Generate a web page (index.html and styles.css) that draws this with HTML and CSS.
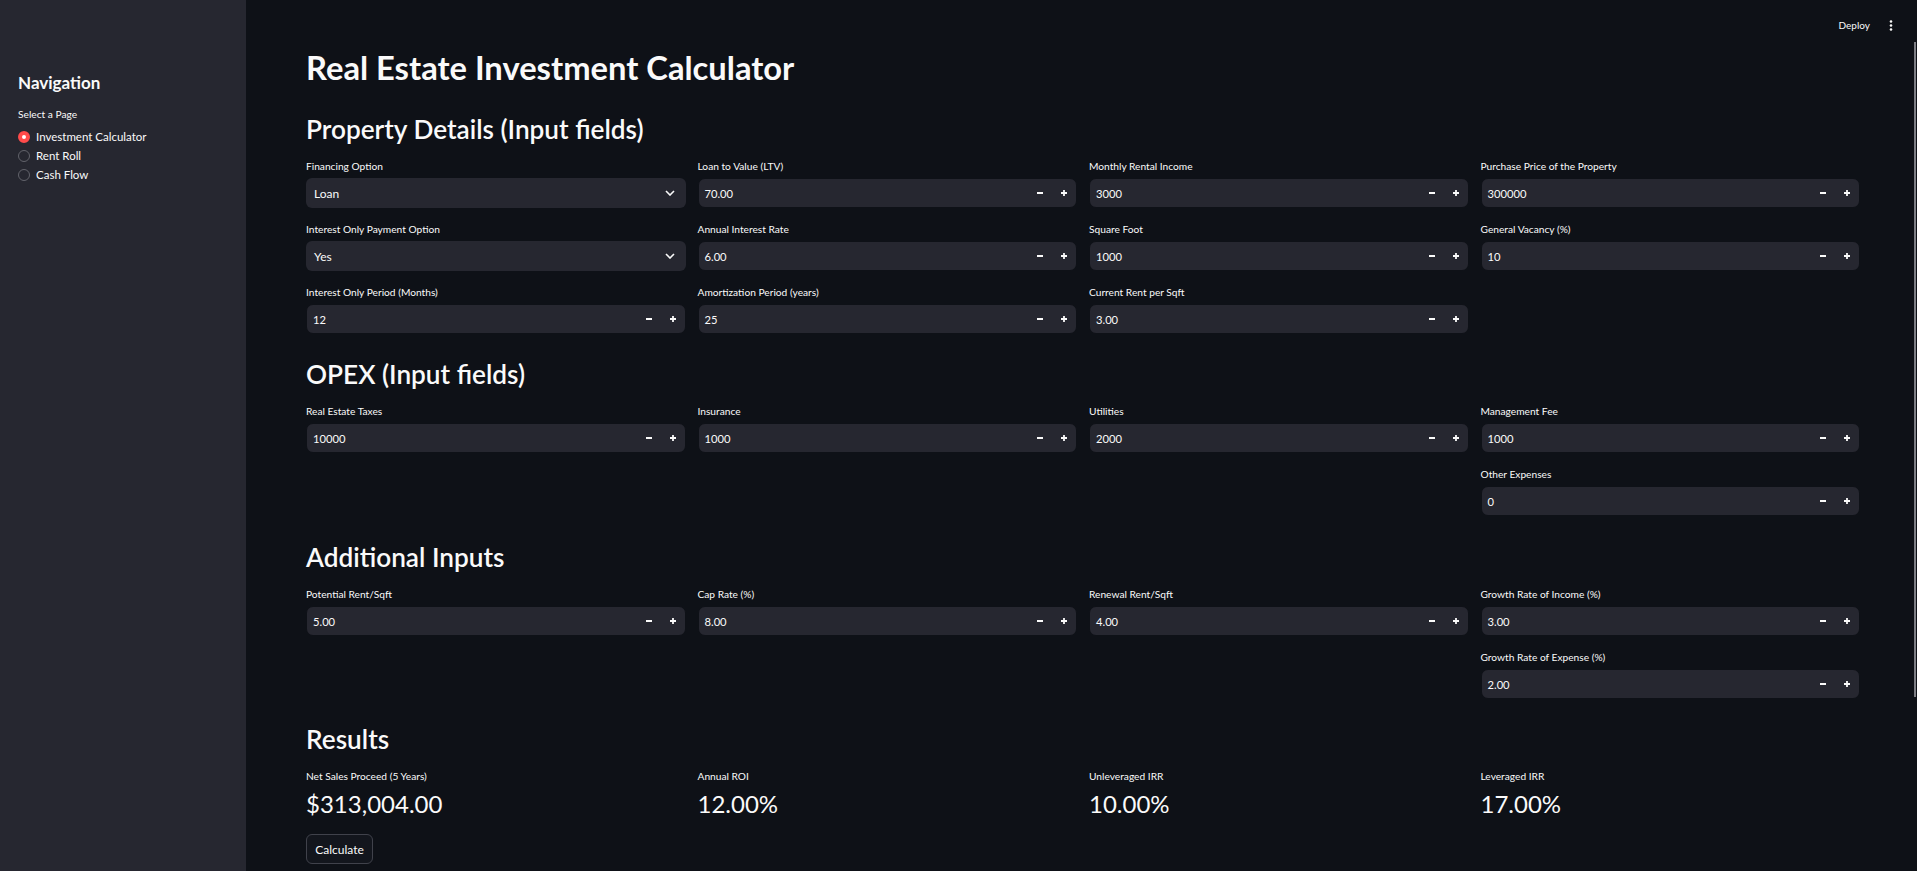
FILE: index.html
```html
<!DOCTYPE html>
<html lang="en">

<head>
    <meta charset="UTF-8">
    <title>Real Estate Investment Calculator</title>
    <link rel="stylesheet" href="styles.css">
</head>

<body>
    <svg class="defs" width="0" height="0">
        <symbol id="minus" viewBox="0 0 8 8"><path d="M1 3h6v2H1z" fill="currentColor" /></symbol>
        <symbol id="plus" viewBox="0 0 8 8"><path d="M3.1 1h1.8v2.1H7v1.8H4.9V7H3.1V4.9H1V3.1h2.1z" fill="currentColor" /></symbol>
        <symbol id="chevron" viewBox="0 0 10 6"><path d="M1 1l4 4 4-4" fill="none" stroke="currentColor" stroke-width="1.6" /></symbol>
    </svg>

    <aside class="sidebar">
        <h3 class="nav-title">Navigation</h3>
        <p class="label">Select a Page</p>
        <div class="radio-item"><span class="radio selected"></span>Investment Calculator</div>
        <div class="radio-item"><span class="radio"></span>Rent Roll</div>
        <div class="radio-item"><span class="radio"></span>Cash Flow</div>
    </aside>

    <main class="main">
        <header class="topbar">
            <span class="deploy">Deploy</span>
            <svg class="kebab" width="4" height="11" viewBox="0 0 4 11"><circle cx="2" cy="1.5" r="1.3" fill="#fafafa" /><circle cx="2" cy="5.5" r="1.3" fill="#fafafa" /><circle cx="2" cy="9.5" r="1.3" fill="#fafafa" /></svg>
        </header>
        <div class="scroll-thumb"></div>

        <h1 class="title">Real Estate Investment Calculator</h1>

        <h2 class="heading first">Property Details (Input fields)</h2>
        <section class="columns">
            <div class="column">
                <div class="field"><p class="label">Financing Option</p>
                    <div class="select"><span>Loan</span><svg class="chev"><use href="#chevron" /></svg></div></div>
                <div class="field"><p class="label">Interest Only Payment Option</p>
                    <div class="select"><span>Yes</span><svg class="chev"><use href="#chevron" /></svg></div></div>
                <div class="field"><p class="label">Interest Only Period (Months)</p>
                    <div class="number"><span class="value">12</span><svg class="step"><use href="#minus" /></svg><svg class="step"><use href="#plus" /></svg></div></div>
            </div>
            <div class="column">
                <div class="field"><p class="label">Loan to Value (LTV)</p>
                    <div class="number"><span class="value">70.00</span><svg class="step"><use href="#minus" /></svg><svg class="step"><use href="#plus" /></svg></div></div>
                <div class="field"><p class="label">Annual Interest Rate</p>
                    <div class="number"><span class="value">6.00</span><svg class="step"><use href="#minus" /></svg><svg class="step"><use href="#plus" /></svg></div></div>
                <div class="field"><p class="label">Amortization Period (years)</p>
                    <div class="number"><span class="value">25</span><svg class="step"><use href="#minus" /></svg><svg class="step"><use href="#plus" /></svg></div></div>
            </div>
            <div class="column">
                <div class="field"><p class="label">Monthly Rental Income</p>
                    <div class="number"><span class="value">3000</span><svg class="step"><use href="#minus" /></svg><svg class="step"><use href="#plus" /></svg></div></div>
                <div class="field"><p class="label">Square Foot</p>
                    <div class="number"><span class="value">1000</span><svg class="step"><use href="#minus" /></svg><svg class="step"><use href="#plus" /></svg></div></div>
                <div class="field"><p class="label">Current Rent per Sqft</p>
                    <div class="number"><span class="value">3.00</span><svg class="step"><use href="#minus" /></svg><svg class="step"><use href="#plus" /></svg></div></div>
            </div>
            <div class="column">
                <div class="field"><p class="label">Purchase Price of the Property</p>
                    <div class="number"><span class="value">300000</span><svg class="step"><use href="#minus" /></svg><svg class="step"><use href="#plus" /></svg></div></div>
                <div class="field"><p class="label">General Vacancy (%)</p>
                    <div class="number"><span class="value">10</span><svg class="step"><use href="#minus" /></svg><svg class="step"><use href="#plus" /></svg></div></div>
            </div>
        </section>

        <h2 class="heading opex">OPEX (Input fields)</h2>
        <section class="columns">
            <div class="column">
                <div class="field"><p class="label">Real Estate Taxes</p>
                    <div class="number"><span class="value">10000</span><svg class="step"><use href="#minus" /></svg><svg class="step"><use href="#plus" /></svg></div></div>
            </div>
            <div class="column">
                <div class="field"><p class="label">Insurance</p>
                    <div class="number"><span class="value">1000</span><svg class="step"><use href="#minus" /></svg><svg class="step"><use href="#plus" /></svg></div></div>
            </div>
            <div class="column">
                <div class="field"><p class="label">Utilities</p>
                    <div class="number"><span class="value">2000</span><svg class="step"><use href="#minus" /></svg><svg class="step"><use href="#plus" /></svg></div></div>
            </div>
            <div class="column">
                <div class="field"><p class="label">Management Fee</p>
                    <div class="number"><span class="value">1000</span><svg class="step"><use href="#minus" /></svg><svg class="step"><use href="#plus" /></svg></div></div>
                <div class="field"><p class="label">Other Expenses</p>
                    <div class="number"><span class="value">0</span><svg class="step"><use href="#minus" /></svg><svg class="step"><use href="#plus" /></svg></div></div>
            </div>
        </section>

        <h2 class="heading additional">Additional Inputs</h2>
        <section class="columns">
            <div class="column">
                <div class="field"><p class="label">Potential Rent/Sqft</p>
                    <div class="number"><span class="value">5.00</span><svg class="step"><use href="#minus" /></svg><svg class="step"><use href="#plus" /></svg></div></div>
            </div>
            <div class="column">
                <div class="field"><p class="label">Cap Rate (%)</p>
                    <div class="number"><span class="value">8.00</span><svg class="step"><use href="#minus" /></svg><svg class="step"><use href="#plus" /></svg></div></div>
            </div>
            <div class="column">
                <div class="field"><p class="label">Renewal Rent/Sqft</p>
                    <div class="number"><span class="value">4.00</span><svg class="step"><use href="#minus" /></svg><svg class="step"><use href="#plus" /></svg></div></div>
            </div>
            <div class="column">
                <div class="field"><p class="label">Growth Rate of Income (%)</p>
                    <div class="number"><span class="value">3.00</span><svg class="step"><use href="#minus" /></svg><svg class="step"><use href="#plus" /></svg></div></div>
                <div class="field"><p class="label">Growth Rate of Expense (%)</p>
                    <div class="number"><span class="value">2.00</span><svg class="step"><use href="#minus" /></svg><svg class="step"><use href="#plus" /></svg></div></div>
            </div>
        </section>

        <h2 class="heading results">Results</h2>
        <section class="columns">
            <div class="metric"><p class="label">Net Sales Proceed (5 Years)</p><p class="metric-value">$313,004.00</p></div>
            <div class="metric"><p class="label">Annual ROI</p><p class="metric-value">12.00%</p></div>
            <div class="metric"><p class="label">Unleveraged IRR</p><p class="metric-value">10.00%</p></div>
            <div class="metric"><p class="label">Leveraged IRR</p><p class="metric-value">17.00%</p></div>
        </section>
        <button class="calc-btn">Calculate</button>
    </main>
</body>

</html>
```

FILE: styles.css
```css
* {
    margin: 0;
    padding: 0;
    box-sizing: border-box;
}

html,
body {
    height: 100%;
    overflow: hidden;
}

body {
    display: flex;
    background-color: #0e1117;
    color: #fafafa;
    font-family: Lato, "Noto Sans", sans-serif;
}

.defs {
    position: absolute;
}

/* sidebar */
.sidebar {
    width: 246px;
    flex-shrink: 0;
    background-color: #262730;
    padding: 73px 18px 0;
}

.nav-title {
    font-size: 17px;
    line-height: 20px;
    font-weight: 700;
    margin-bottom: 14px;
}

.sidebar .label {
    margin-bottom: 6px;
}

.radio-item {
    display: flex;
    align-items: center;
    gap: 6px;
    height: 19px;
    font-size: 11.5px;
}

.radio {
    width: 12px;
    height: 12px;
    border-radius: 50%;
    border: 1.5px solid #62636b;
}

.radio.selected {
    border: 4px solid #ff4b4b;
    background-color: #fff;
}

/* main */
.main {
    flex: 1;
    position: relative;
    padding: 48px 57px 0 60px;
}

.topbar {
    position: absolute;
    top: 18px;
    right: 24px;
    display: flex;
    align-items: center;
    gap: 19px;
    height: 14px;
}

.deploy {
    font-size: 10px;
}

.scroll-thumb {
    position: absolute;
    top: 42px;
    right: 1px;
    width: 2px;
    height: 655px;
    background-color: #7d7e84;
}

.title {
    font-size: 32.7px;
    line-height: 40px;
    font-weight: 700;
}

.heading {
    font-size: 26.2px;
    line-height: 32px;
    font-weight: 600;
}

.heading.first {
    margin-top: 25px;
    margin-bottom: 14px;
}

.heading.opex {
    margin-top: 24px;
    margin-bottom: 14px;
}

.heading.additional {
    margin-top: 25px;
    margin-bottom: 14px;
}

.heading.results {
    margin-top: 24px;
    margin-bottom: 14px;
}

.columns {
    display: grid;
    grid-template-columns: repeat(4, 1fr);
    column-gap: 12px;
}

.column {
    display: flex;
    flex-direction: column;
    gap: 14px;
}

.label {
    font-size: 10.2px;
    line-height: 14px;
    margin-bottom: 5px;
}

.select,
.number {
    display: flex;
    align-items: center;
    height: 30px;
    background-color: #262730;
    font-size: 11.2px;
}

.select {
    justify-content: space-between;
    border-radius: 6px;
    padding: 0 11px 0 8px;
    font-size: 12px;
}

.chev {
    width: 10px;
    height: 6px;
}

.number {
    border: 1px solid #0e1117;
    border-radius: 7px;
    padding: 0 8px 0 6px;
}

.value {
    flex: 1;
}

.step {
    width: 8px;
    height: 8px;
    margin-left: 16px;
}

.metric-value {
    font-size: 24px;
    line-height: 31px;
}

.calc-btn {
    margin-top: 15px;
    width: 67px;
    height: 30px;
    background-color: #13161d;
    border: 1px solid #40424b;
    border-radius: 6px;
    color: #fafafa;
    font-family: inherit;
    font-size: 12px;
}
```
